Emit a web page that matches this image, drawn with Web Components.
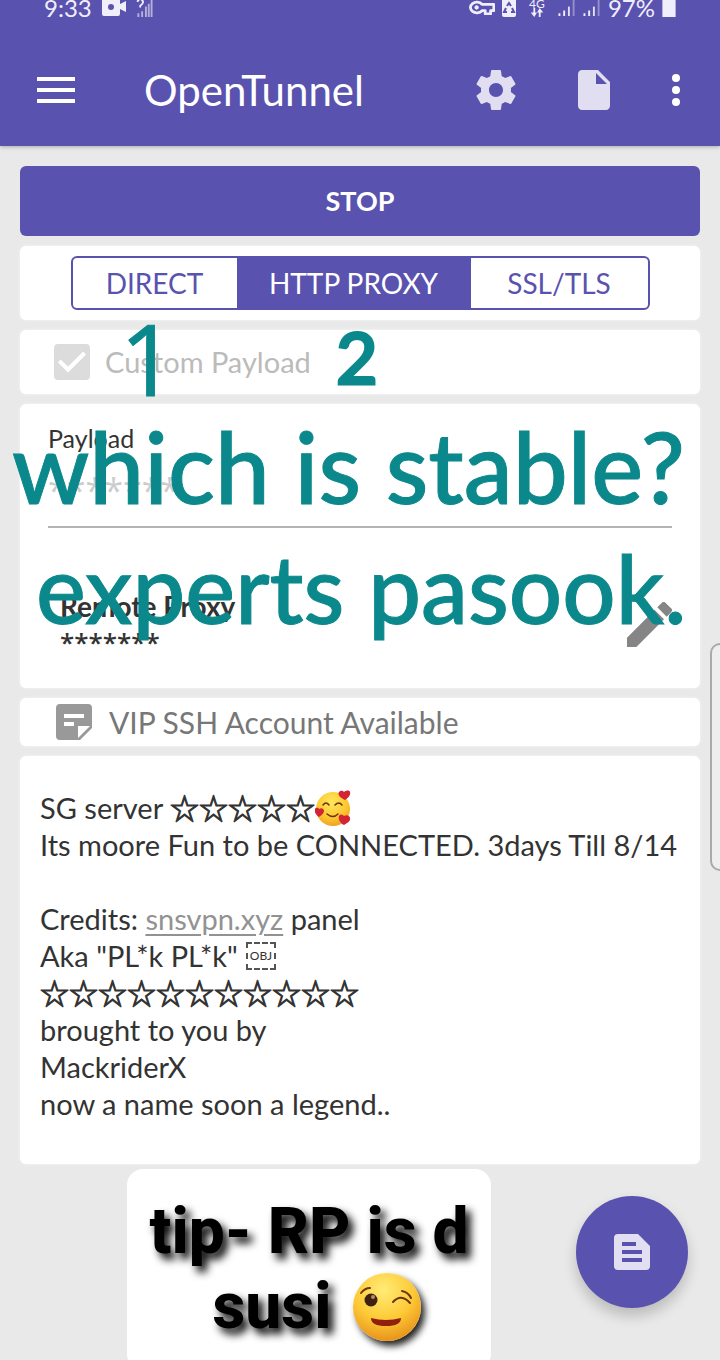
<!DOCTYPE html>
<html lang="en">
<head>
<meta charset="utf-8">
<meta name="viewport" content="width=device-width, initial-scale=1">
<title>OpenTunnel</title>
<style>
  html { --brand: #5952ae; --ink: #333; --marker: #0b888b; }
  body { margin: 0; background: #e9e9e9; color: var(--ink); font-family: Lato, "Open Sans", sans-serif; overflow-x: hidden; }
</style>
</head>
<body>
<ot-app></ot-app>

<script>
/* Icons: view box and shapes */
const ICONS = {
  menu: ['0 0 38 28', '<path d="M0 1h38v4H0zM0 12h38v4H0zM0 23h38v4H0z"/>'],
  gear: ['2 2 20 20', '<path d="M19.43 12.98c.04-.32.07-.64.07-.98s-.03-.66-.07-.98l2.11-1.65c.19-.15.24-.42.12-.64l-2-3.46c-.12-.22-.39-.3-.61-.22l-2.49 1c-.52-.4-1.08-.73-1.69-.98l-.38-2.65C14.46 2.18 14.25 2 14 2h-4c-.25 0-.46.18-.49.42l-.38 2.65c-.61.25-1.17.59-1.69.98l-2.49-1c-.23-.09-.49 0-.61.22l-2 3.46c-.13.22-.07.49.12.64l2.11 1.65c-.04.32-.07.65-.07.98s.03.66.07.98l-2.11 1.65c-.19.15-.24.42-.12.64l2 3.46c.12.22.39.3.61.22l2.49-1c.52.4 1.08.73 1.69.98l.38 2.65c.03.24.24.42.49.42h4c.25 0 .46-.18.49-.42l.38-2.65c.61-.25 1.17-.59 1.69-.98l2.49 1c.23.09.49 0 .61-.22l2-3.46c.12-.22.07-.49-.12-.64l-2.11-1.65zM12 15.5c-1.93 0-3.5-1.57-3.5-3.5s1.57-3.5 3.5-3.5 3.5 1.57 3.5 3.5-1.57 3.5-3.5 3.5z"/>'],
  file: ['4 2 16 20', '<path d="M6 2c-1.100 0-2 .9-2 2v16c0 1.100.9 2 2 2h12c1.100 0 2-.9 2-2V8l-6-6H6zm7 7V3.500L18.500 9H13z"/>'],
  more: ['0 0 8 32', '<circle cx="4" cy="4" r="4"/><circle cx="4" cy="16" r="4"/><circle cx="4" cy="28" r="4"/>'],
  pencil: ['3 3 18 18', '<path d="M3 17.250V21h3.750L17.810 9.940l-3.750-3.750L3 17.250zM20.710 7.040a1 1 0 0 0 0-1.410l-2.340-2.340a1 1 0 0 0-1.410 0l-1.830 1.830 3.750 3.750 1.830-1.830z"/>'],
  note: ['0 0 36 36', '<path fill-rule="evenodd" d="M4 0h28a4 4 0 0 1 4 4v20L24 36H4a4 4 0 0 1-4-4V4a4 4 0 0 1 4-4zM8 10v4h20v-4zM8 18v4h10v-4zM22 34V22h12z"/>'],
  article: ['0 0 36 36', '<path fill-rule="evenodd" d="M4 0h20l12 12v20a4 4 0 0 1-4 4H4a4 4 0 0 1-4-4V4a4 4 0 0 1 4-4zM8 8v4h14V8zM8 16v4h20v-4zM8 24v4h20v-4z"/>'],
  video: ['0 0 24 16', '<path fill-rule="evenodd" d="M0 0h18v4l6-3v11l-6-3v5a2 2 0 0 1-2 2H2a2 2 0 0 1-2-2zM9 4a3 3 0 1 0 0 6 3 3 0 0 0 0-6z"/>'],
  unknown: ['0 0 17 18', '<g opacity=".6"><path d="M1 14h2v4H1zM5 12h2v6H5zM9 7h2v11H9zM12 4h2v14h-2zM15 0h2v18h-2z"/></g><path d="M1 2q1-3 3-3t3 3q0 2-3 4v2" fill="none" stroke="currentColor" stroke-width="2"/>'],
  key: ['0 0 24 14', '<path fill="none" stroke="currentColor" stroke-width="2.600" stroke-linejoin="round" d="M12 4a6 5 0 1 0 0 6h3v3h5v-3h3V4z"/><circle cx="7" cy="7" r="2"/>'],
  recycle: ['0 0 14 17', '<path d="M0 0h14v15a2 2 0 0 1-2 2H2a2 2 0 0 1-2-2z"/><path d="M5 6l2-3 2 3M10 8l2 4H9M5 12H2l2-4" fill="none" stroke="#5952ae" stroke-width="2"/>'],
  arrows: ['0 0 14 10', '<path d="M3 0h2v5h2l-3 5-4-5h3zM9 10V5H7l3-5 4 5h-3v5z"/>'],
  signal: ['0 0 18 18', '<path d="M0 14h2v3H0zM5 11h2v6H5z"/><path opacity=".9" d="M10 7h2v10h-2z"/><path opacity=".4" d="M15 0h2v17h-2z"/>'],
  battery: ['0 0 14 18', '<path d="M0 0h14v18H0z"/>'],
  wink: ['0 0 68 68', '<defs><radialGradient id="w" cx=".45" cy=".25" r=".8"><stop offset="0" stop-color="#ffec77"/><stop offset=".55" stop-color="#fdc936"/><stop offset="1" stop-color="#e58b16"/></radialGradient></defs><circle cx="34" cy="34" r="34" fill="url(#w)"/><circle cx="18" cy="27" r="6.500" fill="#40200f"/><circle cx="20" cy="24" r="2" fill="#b98b68"/><g fill="none" stroke="#68350f" stroke-width="2" stroke-linecap="round"><path d="M8 20q4-5 9-5M40 29q8-9 17 1M49 18q6 1 9 7"/></g><path d="M18 45q15 4 30 0 0 8-15 8t-15-8z" fill="#8f2010"/>'],
  hearts: ['0 0 36 36', '<defs><radialGradient id="h" cx=".45" cy=".3" r=".8"><stop offset="0" stop-color="#ffe75c"/><stop offset=".6" stop-color="#fcc62f"/><stop offset="1" stop-color="#e9901d"/></radialGradient></defs><circle cx="18" cy="19" r="17" fill="url(#h)"/><g fill="none" stroke="#68350f" stroke-width="1.500" stroke-linecap="round"><path d="M8 15q3-4 6 0M20 15q4-4 7 0M12 24q6 5 11 0"/></g><g fill="#d32334"><path d="M30 10c-4-2-8-5-6-8 2-2 4-1 5 0 2-2 6-2 6 0 1 3-2 6-5 8z"/><path d="M29 35c-4-2-6-6-5-9 2-3 4-1 5 0 3-2 6 0 6 2 1 3-3 5-6 7z"/><path d="M4 27c-3-2-5-5-4-8 1-2 4-1 4 0 3-2 5 0 5 2s-2 4-5 6z"/></g>'],
};

/* Registers an element whose shadow root is cloned from the given markup */
const define = (name, html) => {
  const template = document.createElement('template');
  template.innerHTML = html;
  customElements.define(name, class extends HTMLElement {
    constructor() {
      super();
      this.attachShadow({ mode: 'open' }).append(template.content.cloneNode(true));
    }
  });
};

customElements.define('ot-icon', class extends HTMLElement {
  connectedCallback() {
    const [box, shapes] = ICONS[this.getAttribute('name')];
    const root = this.shadowRoot || this.attachShadow({ mode: 'open' });
    root.innerHTML = `
      <style>:host { display: inline-flex; flex: none; } svg { display: block; width: 100%; height: 100%; fill: currentColor; }</style>
      <svg viewBox="${box}" aria-hidden="true">${shapes}</svg>`;
  }
});

define('ot-status-bar', `
  <style>
    :host { display: flex; justify-content: space-between; align-items: flex-start; height: 34px; padding: 0 44px; overflow: hidden; color: #f1eefb; font-size: 24px; line-height: 16px; box-sizing: border-box; }
    div { display: flex; align-items: flex-start; gap: 10px; height: 18px; }
    .end { gap: 7px; }
    .net { display: grid; justify-items: center; font-size: 12px; line-height: 8px; width: 28px; }
    .video { width: 24px; height: 16px; } .unknown { width: 17px; height: 17px; }
    .key { width: 26px; height: 15px; } .recycle { width: 14px; height: 17px; }
    .arrows { width: 14px; height: 9px; } .signal { width: 18px; height: 17px; } .battery { width: 14px; height: 17px; }
  </style>
  <div><span>9:33</span><ot-icon class="video" name="video"></ot-icon><ot-icon class="unknown" name="unknown"></ot-icon></div>
  <div class="end"><ot-icon class="key" name="key"></ot-icon><ot-icon class="recycle" name="recycle"></ot-icon>
    <span class="net">4G<ot-icon class="arrows" name="arrows"></ot-icon></span>
    <ot-icon class="signal" name="signal"></ot-icon><ot-icon class="signal" name="signal"></ot-icon>
    <span>97%</span><ot-icon class="battery" name="battery"></ot-icon></div>`);

define('ot-toolbar', `
  <style>
    :host { display: flex; align-items: center; height: 112px; padding: 0 40px 0 37px; box-sizing: border-box; color: #fff; }
    h1 { flex: 1; margin: 0 0 0 69px; font-size: 42px; line-height: 56px; font-weight: 400; }
    button { display: grid; place-items: center; padding: 0; border: 0; background: none; color: inherit; }
    nav { display: flex; align-items: center; gap: 62px; }
    .menu { width: 38px; height: 28px; } .gear { width: 40px; height: 40px; } .file { width: 32px; height: 40px; } .more { width: 8px; height: 32px; }
    .soft { color: #e0def0; }
  </style>
  <button aria-label="Menu"><ot-icon class="menu" name="menu"></ot-icon></button>
  <h1>OpenTunnel</h1>
  <nav>
    <button class="soft" aria-label="Settings"><ot-icon class="gear" name="gear"></ot-icon></button>
    <button class="soft" aria-label="New file"><ot-icon class="file" name="file"></ot-icon></button>
    <button aria-label="More"><ot-icon class="more" name="more"></ot-icon></button>
  </nav>`);

define('ot-card', `
  <style>:host { display: block; background: #fff; border-radius: 6px; box-shadow: 0 0 3px #f6f6f6; box-sizing: border-box; }</style>
  <slot></slot>`);

define('ot-modes', `
  <style>
    :host { display: flex; justify-content: center; padding: 10px; }
    fieldset { display: grid; grid-template-columns: 164px 234px 177px; margin: 0; padding: 0; border: 2px solid var(--brand); border-radius: 6px; overflow: hidden; box-sizing: border-box; min-width: 0; }
    label { display: grid; place-items: center; height: 50px; font-size: 28px; line-height: 36px; color: var(--brand); }
    input { appearance: none; position: absolute; margin: 0; width: 0; height: 0; }
    label:has(input:checked) { background: var(--brand); color: #fff; }
  </style>
  <fieldset aria-label="Connection mode">
    <label><input type="radio" name="mode">DIRECT</label>
    <label><input type="radio" name="mode" checked>HTTP PROXY</label>
    <label><input type="radio" name="mode">SSL/TLS</label>
  </fieldset>`);

define('ot-check', `
  <style>
    :host { display: flex; align-items: center; height: 64px; padding: 0 34px; }
    label { display: flex; align-items: center; gap: 15px; font-size: 29px; line-height: 36px; color: #bbb; }
    input { appearance: none; display: grid; place-items: center; width: 36px; height: 36px; margin: 0; border-radius: 4px; background: #dcdcdc; }
    input::before { content: ""; width: 28px; height: 21px; background: #fff; clip-path: polygon(0 52%, 9% 38%, 36% 72%, 90% 0, 100% 14%, 36% 100%); }
  </style>
  <label><input type="checkbox" checked disabled>Custom Payload</label>`);

define('ot-payload', `
  <style>
    :host { display: flex; flex-direction: column; height: 284px; padding: 18px 28px; box-sizing: border-box; }
    label { font-size: 25px; line-height: 32px; }
    input { width: 100%; height: 74px; padding: 0; box-sizing: border-box; border: 0; border-bottom: 2px solid #b4b4b4; border-radius: 0; background: none; color: #ccc; font: 34px/48px "Open Sans", sans-serif; }
    .proxy { display: flex; align-items: center; justify-content: space-between; margin-top: 60px; padding-left: 12px; }
    h2 { margin: 0; font-size: 28px; line-height: 36px; font-weight: 700; }
    p { margin: 0; height: 36px; font: 600 26px/36px "Open Sans", sans-serif; }
    button { display: grid; padding: 0; border: 0; background: none; color: #858585; }
    ot-icon { width: 45px; height: 45px; }
  </style>
  <label for="payload">Payload</label>
  <input id="payload" type="text" value="*******" disabled>
  <div class="proxy"><div><h2>Remote Proxy</h2><p>*******</p></div>
    <button aria-label="Edit remote proxy"><ot-icon name="pencil"></ot-icon></button></div>`);

define('ot-account', `
  <style>
    :host { display: flex; align-items: center; gap: 17px; height: 48px; padding: 0 36px; color: #777; font-size: 30px; line-height: 36px; }
    ot-icon { width: 36px; height: 36px; color: #999; }
  </style>
  <ot-icon name="note"></ot-icon><span>VIP SSH Account Available</span>`);

define('ot-message', `
  <style>
    :host { display: block; padding: 33px 20px 42px; font-size: 29px; line-height: 37px; white-space: nowrap; }
    p { margin: 0; height: 37px; display: flex; align-items: center; }
    p > span, a { white-space: pre; }
    a { color: #929292; text-underline-offset: 4px; }
    .stars { font-family: "Noto Sans CJK JP", sans-serif; -webkit-text-stroke: 1px currentColor; }
    ot-icon { width: 36px; height: 36px; }
    .obj { margin-left: 8px; padding: 0 2px; border: 2px dashed #555; font-size: 12px; line-height: 24px; }
  </style>
  <p><span>SG server </span><span class="stars">☆☆☆☆☆</span><ot-icon name="hearts"></ot-icon></p>
  <p><span>Its moore Fun to be CONNECTED. 3days Till 8/14</span></p>
  <p></p>
  <p><span>Credits: </span><a href="#panel">snsvpn.xyz</a><span> panel</span></p>
  <p><span>Aka "PL*k PL*k"</span><span class="obj">OBJ</span></p>
  <p><span class="stars">☆☆☆☆☆☆☆☆☆☆☆</span></p>
  <p><span>brought to you by</span></p>
  <p><span>MackriderX</span></p>
  <p><span>now a name soon a legend..</span></p>`);

/* Handwritten remarks laid over the screen */
define('ot-remarks', `
  <style>
    :host { position: absolute; inset: 0; pointer-events: none; color: var(--marker); white-space: nowrap; font-weight: 500; -webkit-text-stroke: 1px var(--marker); }
    span { position: absolute; }
    .one { left: 120px; top: 308px; font: 500 98px/100px "Open Sans", sans-serif; }
    .two { left: 336px; top: 320px; font-size: 72px; line-height: 72px; -webkit-text-stroke-width: 3px; }
    .ask { left: 12px; top: 418px; font-size: 98px; line-height: 96px; }
    .call { left: 36px; top: 540px; font-size: 94px; line-height: 96px; }
  </style>
  <span class="one">1</span><span class="two">2</span>
  <span class="ask">which is stable?</span><span class="call">experts pasook.</span>`);

define('ot-tip', `
  <style>
    :host { position: fixed; left: 127px; bottom: -10px; width: 364px; height: 201px; padding-top: 25px; box-sizing: border-box; border-radius: 16px; background: #fff; color: #000; text-align: center; font: 800 64px/75px Roboto, sans-serif; text-shadow: 5px 6px 8px #000; white-space: nowrap; }
    p { display: flex; justify-content: center; align-items: center; gap: 22px; margin: 0; height: 75px; }
    .second { padding-left: 16px; }
    ot-icon { width: 68px; height: 68px; border-radius: 50%; box-shadow: 4px 5px 7px #222; }
  </style>
  <p>tip- RP is d</p><p class="second">susi <ot-icon name="wink"></ot-icon></p>`);

define('ot-fab', `
  <style>
    :host { position: fixed; right: 32px; bottom: 52px; }
    button { display: grid; place-items: center; width: 112px; height: 112px; padding: 0; border: 0; border-radius: 50%; background: var(--brand); color: #e2dff3; box-shadow: 0 8px 14px #0003; }
    ot-icon { width: 36px; height: 36px; }
  </style>
  <button aria-label="Show log"><ot-icon name="article"></ot-icon></button>`);

define('ot-edge-handle', `
  <style>:host { position: fixed; right: -12px; top: 643px; width: 22px; height: 228px; box-sizing: border-box; border: 2px solid #aaa; border-radius: 10px; background: #eee; }</style>`);

define('ot-app', `
  <style>
    :host { display: block; position: relative; min-height: 100vh; }
    header { background: var(--brand); box-shadow: 0 1px 4px #0004; }
    main { display: flex; flex-direction: column; gap: 10px; padding: 20px; }
    .stop { height: 70px; padding: 0; border: 0; border-radius: 6px; background: var(--brand); color: #fff; font: 700 27px/36px Lato, sans-serif; }
  </style>
  <header><ot-status-bar></ot-status-bar><ot-toolbar></ot-toolbar></header>
  <main>
    <button class="stop">STOP</button>
    <ot-card><ot-modes></ot-modes></ot-card>
    <ot-card><ot-check></ot-check></ot-card>
    <ot-card><ot-payload></ot-payload></ot-card>
    <ot-card><ot-account></ot-account></ot-card>
    <ot-card><ot-message></ot-message></ot-card>
  </main>
  <ot-remarks></ot-remarks>
  <ot-edge-handle></ot-edge-handle>
  <ot-tip></ot-tip>
  <ot-fab></ot-fab>`);
</script>
</body>
</html>
